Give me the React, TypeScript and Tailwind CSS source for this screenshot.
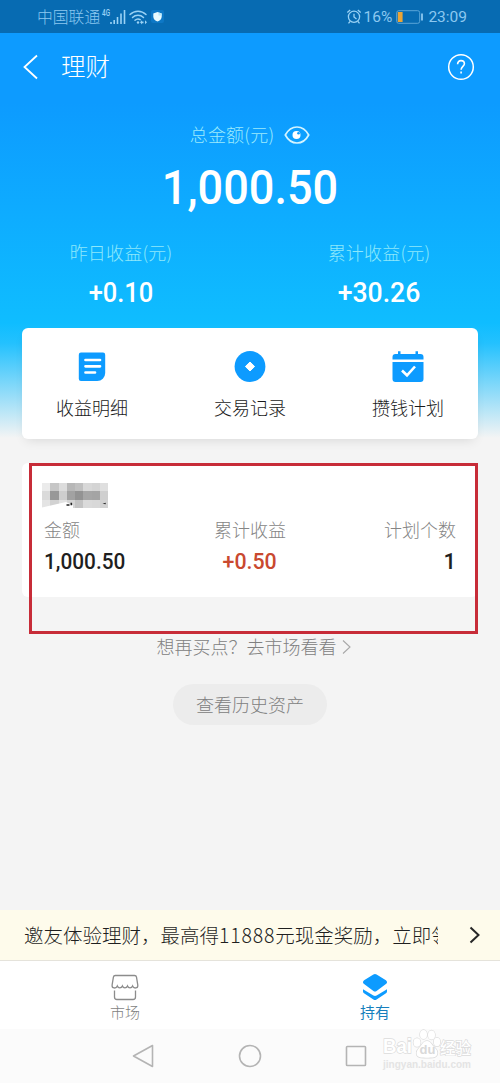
import type { ReactNode } from 'react';

interface IShortcut {
  id: number;
  title: string;
  icon: ReactNode;
}

const shortcuts: IShortcut[] = [
  {
    id: 0,
    title: '收益明细',
    icon: (
      <svg width="32" height="32" viewBox="0 0 32 32" fill="none">
        <path
          fill="#0d9bff"
          d="M5 1.500h22a2.200 2.200 0 0 1 2.200 2.200V22a8 8 0 0 1-8 8H5a2.200 2.200 0 0 1-2.200-2.200V3.700a2.200 2.200 0 0 1 2.200-2.200Z"
        />
        <path stroke="#fff" strokeWidth="2.700" strokeLinecap="round" d="M9.500 9H24M9.500 15.300H24M9.500 21.500H19" />
      </svg>
    ),
  },
  {
    id: 1,
    title: '交易记录',
    icon: (
      <svg width="32" height="32" viewBox="0 0 32 32">
        <circle cx="16" cy="15.500" r="15.400" fill="#0d9bff" />
        <path fill="#fff" stroke="#fff" strokeLinejoin="round" d="m16 11 4.600 4.500-4.600 4.500-4.600-4.500Z" />
      </svg>
    ),
  },
  {
    id: 2,
    title: '攒钱计划',
    icon: (
      <svg width="32" height="32" viewBox="0 0 32 32" fill="none">
        <path
          fill="#0d9bff"
          d="M6 .300h2.500V3h15V.300H26V3h2.500a3 3 0 0 1 3 3v2.500H.5V6a3 3 0 0 1 3-3H6ZM.5 11h31v17a3 3 0 0 1-3 3h-25a3 3 0 0 1-3-3Z"
        />
        <path stroke="#fff" strokeWidth="2.600" d="m10 19.500 5 4.800 8-8.800" />
      </svg>
    ),
  },
];

const mosaic = [
  'bg-[#ebebeb]', 'bg-[#c6c6c6]', 'bg-[#dcdcdc]', 'bg-[#b7b7b7]', 'bg-[#c0c0c0]', 'bg-[#d8d8d8]', 'bg-[#d4d4d4]', 'bg-[#dfdfdf]',
  'bg-[#dadada]', 'bg-[#989898]', 'bg-[#cecece]', 'bg-[#a2a2a2]', 'bg-[#939393]', 'bg-[#a6a6a6]', 'bg-[#a4a4a4]', 'bg-[#cfcfcf]',
  'bg-[#e4e4e4]', 'bg-[#d2d2d2]', 'bg-[#e2e2e2]', 'bg-[#d4d4d4]', 'bg-[#c3c3c3]', 'bg-[#dadada]', 'bg-[#d8d8d8]', 'bg-[#d2d2d2]',
];

function StatusBar() {
  return (
    <div className="flex h-[33px] items-center bg-[#076bb2] pr-[33px] pl-[37px] text-[#8cc8f0]">
      <span className="text-[15.8px] leading-none font-light">中国联通</span>
      <svg className="ml-px" width="64" height="24" viewBox="0 0 64 24" fill="none">
        <text
          x="1"
          y="10.500"
          fontSize="9"
          fontWeight="500"
          fontFamily="Roboto, sans-serif"
          fill="#9ad2f5"
          textLength="8"
          lengthAdjust="spacingAndGlyphs"
        >
          4G
        </text>
        <path stroke="#9ad2f5" strokeWidth="1.600" d="M10 19v-2M13.200 19v-4M16.500 19v-7M20 19V8.500M23.500 19V5" />
        <g stroke="#9ad2f5" strokeWidth="1.500" strokeLinecap="round">
          <path d="M29 9.500c4.500-4.500 11.500-4.500 16 0M31.500 12.500c3-3 8-3 11 0M34 15.300c1.800-1.600 3.600-1.600 5.200-.6" />
        </g>
        <circle cx="37" cy="17.500" r="1.200" fill="#9ad2f5" />
        <path fill="#9ad2f5" d="m39 17.300 2-2v1.300h1.500v1.600H41v1.200ZM46 17.300l-2-2v4Z" />
        <rect x="50" y="5" width="13" height="13" rx="2" fill="#0d78c6" />
        <path fill="#e9fbff" d="m56.500 7 4.200 1.500v3.300c0 2.400-1.800 3.800-4.200 4.800-2.400-1-4.200-2.400-4.200-4.800V8.500Z" />
        <path fill="#b9e8fa" d="M57.500 7.400v3h3.200V8.500Z" />
      </svg>
      <div className="ml-auto flex items-center">
        <svg width="16" height="17" viewBox="0 0 16 17" fill="none" stroke="#9ad2f5" strokeWidth="1.300">
          <circle cx="8" cy="8.800" r="5.600" />
          <path d="M8 5.800V9l2.500 2M1.300 4.500 4.200 2M14.700 4.500 11.800 2M4 13.500l-1.500 1.800M12 13.500l1.500 1.800" />
        </svg>
        <span className="mt-0.5 ml-0.5 font-[Roboto,sans-serif] text-[15.5px]">16%</span>
        <svg className="ml-1" width="28" height="14" viewBox="0 0 28 14" fill="none">
          <rect x=".7" y=".7" width="23" height="12.600" rx="2" stroke="#5aa5d8" />
          <rect x="1.800" y="2" width="4.800" height="10" fill="#eba536" />
          <path stroke="#8cc8f0" strokeWidth="1.800" d="M26 3.500v7" />
        </svg>
        <span className="mt-0.5 ml-1 font-[Roboto,sans-serif] text-[15.5px]">23:09</span>
      </div>
    </div>
  );
}

function Summary() {
  return (
    <div className="text-center text-white">
      <header className="flex h-[67px] items-center pr-[25px] pl-[22px]">
        <svg width="18" height="26" viewBox="0 0 18 26" fill="none">
          <path stroke="#fff" strokeWidth="1.800" d="M15 1.500 2.500 13 15 24.500" />
        </svg>
        <h1 className="ml-[21px] text-[24.5px] font-light">理财</h1>
        <svg className="ml-auto" width="28" height="28" viewBox="0 0 28 28" fill="none">
          <circle cx="14" cy="14" r="12.300" stroke="#fff" strokeWidth="1.500" />
          <path
            stroke="#fff"
            strokeWidth="1.600"
            d="M10.600 11.200c0-2.200 1.400-3.600 3.400-3.600s3.400 1.300 3.400 3.200c0 2.600-3.300 2.800-3.300 6M14.100 18.600v2"
          />
        </svg>
      </header>
      <div className="mt-5 flex h-7 items-center justify-center gap-2.5 text-[#9ceafc]">
        <span className="text-lg font-light tracking-[0.2px]">总金额(元)</span>
        <svg className="mt-0.5" width="26" height="20" viewBox="0 0 26 20" fill="none">
          <path
            stroke="#d4f4ff"
            strokeWidth="1.700"
            d="M1.300 10C4 5 8 2 13 2s9 3 11.700 8C22 15 18 18 13 18S4 15 1.300 10Z"
          />
          <circle cx="12.500" cy="10" r="4" fill="#fff" />
          <circle cx="14.500" cy="8.300" r="1.300" fill="#0d9bff" />
        </svg>
      </div>
      <div className="mt-2.5 h-[60px] scale-x-[.92] font-[Roboto,sans-serif] text-[49px] leading-[60px] font-medium">
        1,000.50
      </div>
      <div className="mt-5 flex justify-between px-[60px]">
        <div className="w-[122px]">
          <div className="text-lg leading-7 font-light tracking-[0.2px] text-[#8de8fb]">昨日收益(元)</div>
          <div className="mt-[9px] scale-x-[.91] font-[Roboto,sans-serif] text-[28px] leading-9 font-medium">+0.10</div>
        </div>
        <div className="w-[122px]">
          <div className="text-lg leading-7 font-light tracking-[0.2px] text-[#8de8fb]">累计收益(元)</div>
          <div className="mt-[9px] scale-x-[.95] font-[Roboto,sans-serif] text-[28px] leading-9 font-medium">+30.26</div>
        </div>
      </div>
    </div>
  );
}

function Holding() {
  return (
    <section className="relative mx-[22px] mt-6 h-[134px] rounded-md bg-white pt-5 pr-[22px] pl-5">
      <div className="relative grid h-[25px] w-[66px] grid-cols-8">
        {mosaic.map((color, i) => (
          <span key={i} className={color} />
        ))}
        <svg className="absolute inset-0" width="66" height="25" viewBox="0 0 66 25">
          <path fill="#fff" d="M0 25h31v-2.500L24 19 0 24.500Z" />
          <path fill="#222" d="M24.500 21.200h3v1.500h-3ZM28.500 19.800h1.600v2.500h-1.600ZM60.500 20.800l3.200-1v1.500Z" />
        </svg>
      </div>
      <div className="mt-[7px] grid grid-cols-3 pl-[2px]">
        <div className="text-[#1f1f1f]">
          <Label>金额</Label>
          <div className="mt-[3px] origin-left scale-x-[.945] font-[Roboto,sans-serif] text-[22px] leading-8 font-medium">
            1,000.50
          </div>
        </div>
        <div className="text-center text-[#c9492f]">
          <Label>累计收益</Label>
          <div className="mt-[3px] scale-x-[.97] font-[Roboto,sans-serif] text-[22px] leading-8 font-medium">+0.50</div>
        </div>
        <div className="text-right text-[#1f1f1f]">
          <Label>计划个数</Label>
          <div className="mt-[3px] font-[Roboto,sans-serif] text-[22px] leading-8 font-medium">1</div>
        </div>
      </div>
      {/* 강조 테두리 */}
      <div className="absolute top-0 left-[7px] h-[171px] w-[449px] border-3 border-[#c72c38]" />
    </section>
  );
}

function Label({ children }: { children: ReactNode }) {
  return <div className="text-lg leading-7 font-light text-[#858585]">{children}</div>;
}

function TabBar() {
  return (
    <nav className="flex h-[68px] bg-white text-center text-[15px] leading-5">
      <div className="flex flex-1 flex-col items-center pt-3 text-[#7f7f7f]">
        <svg width="28" height="28" viewBox="0 0 28 28" fill="none" stroke="#8c8c8c" strokeWidth="1.300">
          <path d="M4.500 2.500h19a2 2 0 0 1 2 1.700l1.300 8c.3 3.300-4 3.800-5.200.8-1 2.500-4.200 2.500-5.100 0-1 2.500-4.200 2.500-5.100 0-1 2.500-4.200 2.500-5.100 0-1.200 3-5.500 2.500-5.200-.8l1.300-8a2 2 0 0 1 2.100-1.700Z" />
          <path d="M3.500 17.500v6.500a2.500 2.500 0 0 0 2.500 2.500h16a2.500 2.500 0 0 0 2.500-2.500v-6.500" />
        </svg>
        <span className="mt-px font-light">市场</span>
      </div>
      <div className="flex flex-1 flex-col items-center pt-3 text-[#167fbd]">
        <svg width="28" height="28" viewBox="0 0 28 28" fill="#0d9bff">
          <path d="M12.400 1.500a3.200 3.200 0 0 1 3.200 0l9.300 5.800c1.500 1 1.500 2.800 0 3.800l-9.300 6.900a2.800 2.800 0 0 1-3.200 0l-9.300-6.900c-1.500-1-1.500-2.800 0-3.800Z" />
          <path d="M2 16.200 12.400 22.500a3.200 3.200 0 0 0 3.200 0L26 16.200v2.300c0 .7-.4 1.300-1 1.700l-9.400 6.300a3 3 0 0 1-3.200 0L3 20.200a2 2 0 0 1-1-1.700Z" />
        </svg>
        <span className="mt-px">持有</span>
      </div>
    </nav>
  );
}

function SystemNav() {
  return (
    <div className="relative flex h-[54px] items-center justify-center gap-[82px] bg-[#fbfbfb]">
      <svg width="24" height="24" viewBox="0 0 24 24" fill="none" stroke="#b4b4b4" strokeWidth="1.600">
        <path strokeLinejoin="round" d="M20.500 1.500v21L1.500 12Z" />
      </svg>
      <svg width="24" height="24" viewBox="0 0 24 24" fill="none" stroke="#b4b4b4" strokeWidth="1.600">
        <circle cx="12" cy="12" r="10.500" />
      </svg>
      <svg width="24" height="24" viewBox="0 0 24 24" fill="none" stroke="#b4b4b4" strokeWidth="1.600">
        <rect x="2.500" y="2.500" width="19" height="19" rx=".8" />
      </svg>
      <svg className="absolute top-0 left-[380px]" width="95" height="44" viewBox="0 0 95 44">
        <g
          fill="#fff"
          stroke="#dcdcdc"
          strokeWidth="1.400"
          paintOrder="stroke"
          fontFamily="'Liberation Sans', 'Noto Sans CJK SC', sans-serif"
        >
          <ellipse cx="37" cy="13.500" rx="3.500" ry="4.300" />
          <ellipse cx="43.500" cy="5.500" rx="3.500" ry="4.500" />
          <ellipse cx="51.500" cy="6" rx="3.500" ry="4.500" />
          <ellipse cx="57" cy="13" rx="3.200" ry="4.200" />
          <path d="M47 12c4 0 4.500 4 8 7s3.500 9-2 9.500c-3 .2-9 .2-12 0-5.500-.5-5.500-6-2-9.500s4-7 8-7Z" />
          <text x="3" y="24" fontSize="20" fontWeight="700" textLength="29" lengthAdjust="spacingAndGlyphs">
            Bai
          </text>
          <text x="39.500" y="25" fontSize="13" fontWeight="700" fill="#d9d9d9" stroke="none">
            du
          </text>
          <text x="60" y="25" fontSize="15.500" fontWeight="500">
            经验
          </text>
          <text
            x="3"
            y="39"
            fontSize="10"
            fontWeight="700"
            fill="#e4e4e4"
            stroke="none"
            textLength="88"
            lengthAdjust="spacingAndGlyphs"
          >
            jingyan.baidu.com
          </text>
        </g>
      </svg>
    </div>
  );
}

function App() {
  return (
    <div className="flex h-[1083px] w-[500px] flex-col overflow-hidden bg-[#f4f4f4] font-['Noto_Sans_CJK_SC',sans-serif]">
      <StatusBar />
      <main className="flex-1 bg-[linear-gradient(180deg,#0d9bff_0px,#0d9bff_70px,#0fbdff_290px,#23c1fe_310px,#f4f4f4_405px)]">
        <Summary />
        <section className="mx-[22px] mt-[17px] flex h-[111px] justify-between rounded-md bg-white px-[34px] pt-[23px] shadow-[0_5px_12px_-4px_rgba(0,0,0,0.12)]">
          {shortcuts.map(el => (
            <div key={el.id} className="flex w-[72px] flex-col items-center">
              {el.icon}
              <span className="mt-2.5 text-lg leading-7 font-light text-[#1a1a1a]">{el.title}</span>
            </div>
          ))}
        </section>
        <Holding />
        <div className="mt-[35px] flex items-center justify-center gap-1 pl-2 leading-7 font-light text-[#808080]">
          <span className="text-lg">想再买点？去市场看看</span>
          <svg className="mt-0.5" width="11" height="16" viewBox="0 0 11 16" fill="none">
            <path stroke="#a8a8a8" strokeWidth="1.100" d="m2 1.500 7 6.500-7 6.500" />
          </svg>
        </div>
        <button
          type="button"
          className="mx-auto mt-6 block h-[41px] w-[154px] rounded-full bg-[#ececec] pb-0.5 text-lg font-light text-[#808080]"
        >
          查看历史资产
        </button>
      </main>
      <div className="flex h-[51px] items-center justify-between border-b border-[#e5e3db] bg-[#fefbeb] pr-[18px] pl-6 text-[#1f1f1f]">
        <p className="w-[414px] overflow-hidden text-[19.5px] font-light whitespace-nowrap">
          邀友体验理财，最高得<span className="tracking-[0.8px]">11888</span>元现金奖励，立即领取
        </p>
        <svg width="14" height="20" viewBox="0 0 14 20" fill="none">
          <path stroke="#262626" strokeWidth="2" d="m2.500 2.500 8 7.500-8 7.500" />
        </svg>
      </div>
      <TabBar />
      <SystemNav />
    </div>
  );
}

export default App;
